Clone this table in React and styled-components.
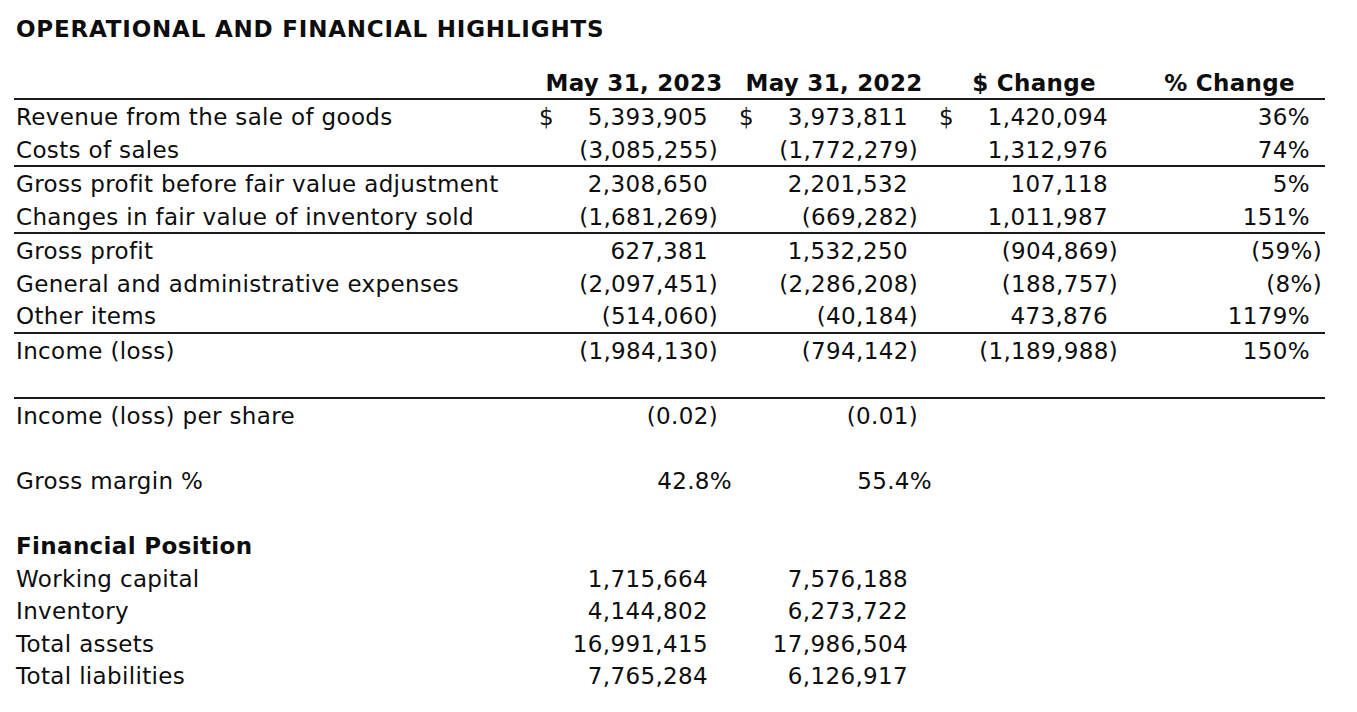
import React from "react";
import styled, {createGlobalStyle} from "styled-components";

const GlobalStyle = createGlobalStyle`
  body {
    margin: 0;
    background: #fff;
    color: #0d0d0d;
    font-family: "DejaVu Sans", Verdana, "Liberation Sans", sans-serif;
  }
`;

const Page = styled.div`
  padding: 17px 32px 0 14px;
`;

const Title = styled.h1`
  margin: 0 0 25px 2px;
  font-size: 23px;
  line-height: 24px;
  font-weight: 700;
  letter-spacing: 0.8px;
`;

const Table = styled.div`
  display: flex;
  flex-direction: column;
  width: 1311px;
`;

// rows are 32.5px; text nudged down a little to sit like the reference
const Row = styled.div`
  display: grid;
  grid-template-columns: 520px 200px 200px 200px 191px;
  align-items: center;
  height: ${p => (p.$h || 32.5) - 2}px;
  padding-top: 2px;
  font-size: 23px;
  letter-spacing: 0.35px;
  border-bottom: ${p => p.$rule ? "2px solid #1a1a1a" : "none"};
`;

const HeadRow = styled(Row)`
  height: 30px;
  font-weight: 700;
  letter-spacing: 0.3px;
`;

const HeadCell = styled.div`
  text-align: center;
  white-space: nowrap;
`;

const Label = styled.div`
  padding-left: 2px;
  white-space: nowrap;
  font-weight: ${p => p.$bold ? 700 : 400};
`;

const Amount = styled.div`
  display: flex;
  justify-content: space-between;
  padding: 0 16px 0 5px;
  white-space: nowrap;
`;

const Pct = styled.div`
  text-align: right;
  padding-right: ${p => p.$pad ?? 3}px;
  white-space: nowrap;
`;

const Spacer = styled.span`
  display: inline-block;
  width: ${p => p.$w || 10}px;
`;

const num = (v, w) => v.startsWith("(") ? <span>{v}</span> : <span>{v}<Spacer $w={w}/></span>

const AmountCell = ({value, dollar}) => <Amount>
    <span>{dollar ? "$" : ""}</span>
    {value ? num(value) : <span/>}
</Amount>

const PctCell = ({value}) => <Pct>{value ? num(value, 12) : null}</Pct>

const income = [
    {label: "Revenue from the sale of goods", v: ["5,393,905", "3,973,811", "1,420,094"], p: "36%", dollar: true},
    {label: "Costs of sales", v: ["(3,085,255)", "(1,772,279)", "1,312,976"], p: "74%", rule: true},
    {label: "Gross profit before fair value adjustment", v: ["2,308,650", "2,201,532", "107,118"], p: "5%"},
    {label: "Changes in fair value of inventory sold", v: ["(1,681,269)", "(669,282)", "1,011,987"], p: "151%", rule: true},
    {label: "Gross profit", v: ["627,381", "1,532,250", "(904,869)"], p: "(59%)"},
    {label: "General and administrative expenses", v: ["(2,097,451)", "(2,286,208)", "(188,757)"], p: "(8%)"},
    {label: "Other items", v: ["(514,060)", "(40,184)", "473,876"], p: "1179%", rule: true},
    {label: "Income (loss)", v: ["(1,984,130)", "(794,142)", "(1,189,988)"], p: "150%"},
]

const position = [
    {label: "Working capital", v: ["1,715,664", "7,576,188"]},
    {label: "Inventory", v: ["4,144,802", "6,273,722"]},
    {label: "Total assets", v: ["16,991,415", "17,986,504"]},
    {label: "Total liabilities", v: ["7,765,284", "6,126,917"]},
]

export default function App() {
    return (
        <Page>
            <GlobalStyle/>
            <Title>OPERATIONAL AND FINANCIAL HIGHLIGHTS</Title>
            <Table>
                <HeadRow $rule>
                    <div/>
                    <HeadCell>May 31, 2023</HeadCell>
                    <HeadCell>May 31, 2022</HeadCell>
                    <HeadCell>$ Change</HeadCell>
                    <HeadCell>% Change</HeadCell>
                </HeadRow>

                {income.map((r, i) => <Row key={i} $rule={r.rule}>
                    <Label>{r.label}</Label>
                    {r.v.map((v, j) => <AmountCell key={j} value={v} dollar={r.dollar}/>)}
                    <PctCell value={r.p}/>
                </Row>)}

                <Row $h={31} $rule/>

                <Row>
                    <Label>Income (loss) per share</Label>
                    <AmountCell value="(0.02)"/>
                    <AmountCell value="(0.01)"/>
                </Row>
                <Row/>
                <Row>
                    <Label>Gross margin %</Label>
                    <Pct $pad={2}>42.8%</Pct>
                    <Pct $pad={2}>55.4%</Pct>
                </Row>
                <Row/>
                <Row>
                    <Label $bold>Financial Position</Label>
                </Row>
                {position.map((r, i) => <Row key={i}>
                    <Label>{r.label}</Label>
                    {r.v.map((v, j) => <AmountCell key={j} value={v}/>)}
                </Row>)}
            </Table>
        </Page>
    );
}
